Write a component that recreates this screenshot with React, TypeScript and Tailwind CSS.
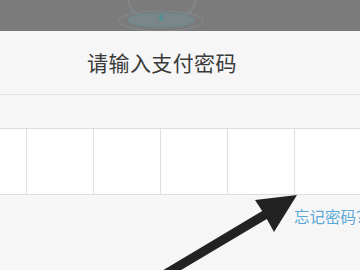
export default function App() {
  return (
    <div className="relative h-[270px] w-[360px] overflow-hidden bg-[#f6f6f6] font-['Noto_Sans_CJK_SC',sans-serif]">
      {/* dimmed page behind the sheet */}
      <div className="h-[31px] bg-[#7b7b7b]">
        <svg width="360" height="31" viewBox="0 0 360 31">
          <ellipse cx="161" cy="21" rx="42" ry="10" fill="none" stroke="#828688" strokeWidth="1.2" />
          <path d="M128 0 Q130 12 140 15 M196 0 Q194 12 184 15" fill="none" stroke="#81878a" strokeWidth="2" />
          <ellipse cx="161" cy="20" rx="33" ry="7" fill="#7b868a" stroke="#6d8890" strokeWidth="1.2" />
          <path d="M159.5 14 L162.5 14 L163.5 21 L158.5 21 Z" fill="#5a8d92" />
        </svg>
      </div>

      <div className="ml-[-40px] w-[404px]">
        <div className="flex h-[64px] items-center justify-center border-b border-[#e2e2e2]">
          <span className="text-[21px] leading-none tracking-[0.4px] text-[#3a3a3a]">请输入支付密码</span>
        </div>

        <div className="mt-[33px] flex border-y border-[#dedede] bg-white">
          {[0, 1, 2, 3, 4, 5].map((i) => (
            <div
              key={i}
              className={`h-[65px] w-[67px] ${i < 5 ? 'border-r border-[#e0e0e0]' : ''}`}
            />
          ))}
        </div>

        <div className="whitespace-nowrap pl-[334px] pt-[11px] text-[15.5px] leading-[21px] text-[#5aa8d8]">
          忘记密码？
        </div>
      </div>

      {/* annotation arrow */}
      <svg className="absolute left-0 top-0" width="360" height="270" viewBox="0 0 360 270">
        <polygon
          points="152.7,276.4 262.2,211.1 255,200 297,195 274,232 266.8,218.9 157.3,284.2"
          fill="#222222"
        />
      </svg>
    </div>
  );
}
